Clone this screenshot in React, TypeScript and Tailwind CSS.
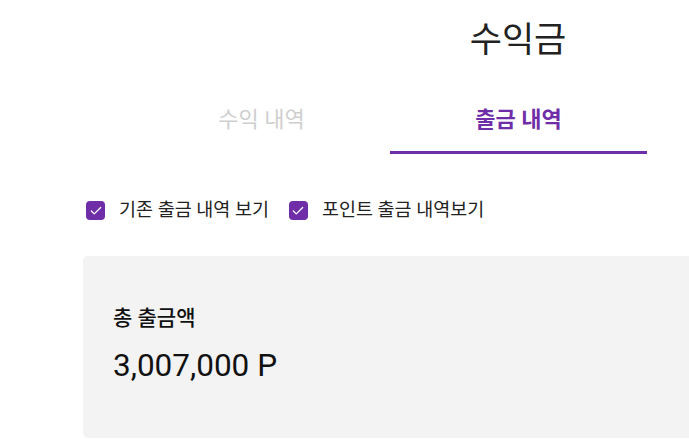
import { Check } from 'lucide-react';

function CheckItem({ label }: { label: string }) {
  return (
    <label className="flex items-center gap-[14px]">
      <span className="flex h-[19px] w-[19px] items-center justify-center rounded-[4px] bg-[#6f2da8]">
        <Check className="h-[14px] w-[14px] text-white" strokeWidth={2.2} />
      </span>
      <span className="text-[18.5px] leading-none text-[#222]">{label}</span>
    </label>
  );
}

export default function App() {
  return (
    <div
      className="h-[442px] w-[689px] overflow-hidden bg-white"
      style={{ fontFamily: 'Roboto, "Noto Sans CJK KR", sans-serif' }}
    >
      <div className="ml-[388px] w-[260px] pt-[19px] text-center text-[35px] leading-[44px] text-[#222]">
        수익금
      </div>

      <div className="ml-[133px] mt-[36px] flex w-[514px]">
        <button className="h-[55px] flex-1 pb-[14px] text-[22px] text-[#cfcfcf]">수익 내역</button>
        <button className="h-[55px] flex-1 border-b-[3px] border-[#6f2da8] pb-[11px] text-[22px] font-bold text-[#6f2da8]">
          출금 내역
        </button>
      </div>

      <div className="ml-[86px] mt-[47px] flex items-center gap-[20px]">
        <CheckItem label="기존 출금 내역 보기" />
        <CheckItem label="포인트 출금 내역보기" />
      </div>

      <div className="ml-[83px] mt-[36px] h-[182px] w-[640px] rounded-[5px] bg-[#f3f3f3] px-[30px] pt-[49px]">
        <div className="text-[21px] font-medium leading-[26px] text-[#111]">총 출금액</div>
        <div className="mt-[17px] text-[31.5px] leading-[36px] text-[#111]">3,007,000 P</div>
      </div>
    </div>
  );
}
